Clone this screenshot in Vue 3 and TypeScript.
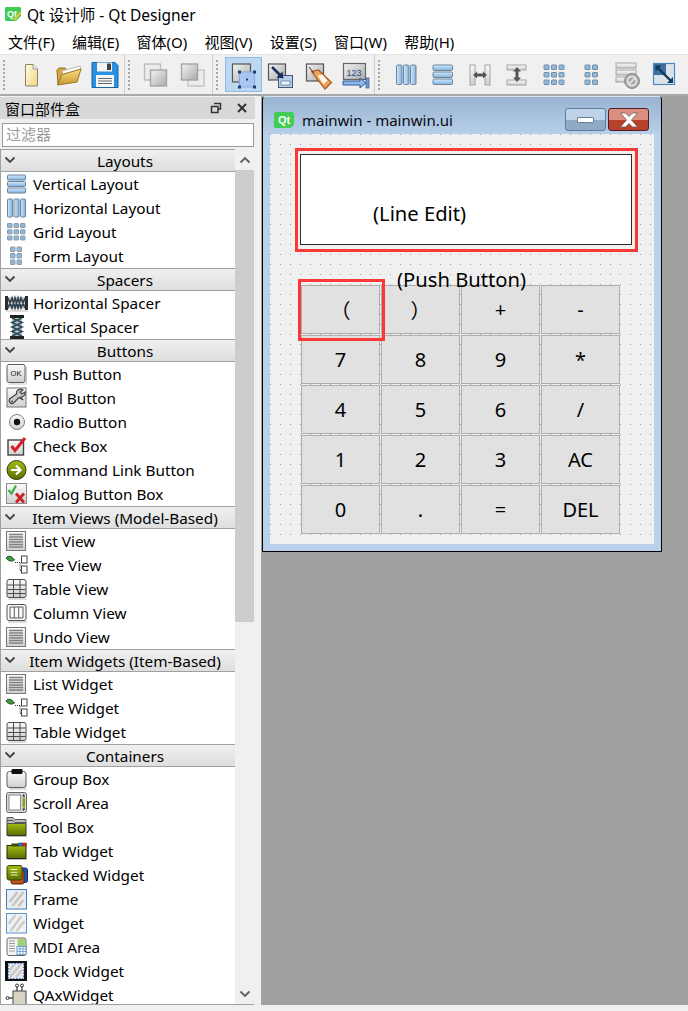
<script setup lang="ts">
type Item = { label: string; icon: string };
type Section = { title: string; items: Item[] };

const menus = ["文件(F)", "编辑(E)", "窗体(O)", "视图(V)", "设置(S)", "窗口(W)", "帮助(H)"];

const toolGroups: { icon: string; active?: boolean }[][] = [
  [{ icon: "t-new" }, { icon: "t-open" }, { icon: "t-save" }],
  [{ icon: "t-front" }, { icon: "t-back" }],
  [{ icon: "t-edit", active: true }, { icon: "t-signal" }, { icon: "t-tag" }, { icon: "t-buddy" }],
  [
    { icon: "t-hbox" },
    { icon: "t-vbox" },
    { icon: "t-hsplit" },
    { icon: "t-vsplit" },
    { icon: "t-grid" },
    { icon: "t-form" },
    { icon: "t-break" },
    { icon: "t-adjust" }
  ]
];

const sections: Section[] = [
  {
    title: "Layouts",
    items: [
      { label: "Vertical Layout", icon: "vbox" },
      { label: "Horizontal Layout", icon: "hbox" },
      { label: "Grid Layout", icon: "grid" },
      { label: "Form Layout", icon: "form" }
    ]
  },
  {
    title: "Spacers",
    items: [
      { label: "Horizontal Spacer", icon: "hspacer" },
      { label: "Vertical Spacer", icon: "vspacer" }
    ]
  },
  {
    title: "Buttons",
    items: [
      { label: "Push Button", icon: "push" },
      { label: "Tool Button", icon: "tool" },
      { label: "Radio Button", icon: "radio" },
      { label: "Check Box", icon: "check" },
      { label: "Command Link Button", icon: "command" },
      { label: "Dialog Button Box", icon: "dialog" }
    ]
  },
  {
    title: "Item Views (Model-Based)",
    items: [
      { label: "List View", icon: "list" },
      { label: "Tree View", icon: "tree" },
      { label: "Table View", icon: "table" },
      { label: "Column View", icon: "column" },
      { label: "Undo View", icon: "list" }
    ]
  },
  {
    title: "Item Widgets (Item-Based)",
    items: [
      { label: "List Widget", icon: "list" },
      { label: "Tree Widget", icon: "tree" },
      { label: "Table Widget", icon: "table" }
    ]
  },
  {
    title: "Containers",
    items: [
      { label: "Group Box", icon: "group" },
      { label: "Scroll Area", icon: "scroll" },
      { label: "Tool Box", icon: "toolbox" },
      { label: "Tab Widget", icon: "tab" },
      { label: "Stacked Widget", icon: "stacked" },
      { label: "Frame", icon: "frame" },
      { label: "Widget", icon: "widget" },
      { label: "MDI Area", icon: "mdi" },
      { label: "Dock Widget", icon: "dock" },
      { label: "QAxWidget", icon: "qax" }
    ]
  }
];

const keys = ["（", "）", "+", "-", "7", "8", "9", "*", "4", "5", "6", "/", "1", "2", "3", "AC", "0", ".", "=", "DEL"];
</script>

<template>
  <div class="app">
    <svg class="defs" width="0" height="0" aria-hidden="true">
      <defs>
        <linearGradient id="gBlue" x1="0" y1="0" x2="0" y2="1"><stop offset="0" stop-color="#d5e9fb" /><stop offset="1" stop-color="#7db2e2" /></linearGradient>
        <linearGradient id="gBlueH" x1="0" y1="0" x2="1" y2="0"><stop offset="0" stop-color="#d5e9fb" /><stop offset="1" stop-color="#7db2e2" /></linearGradient>
        <linearGradient id="gGray" x1="0" y1="0" x2="1" y2="1"><stop offset="0" stop-color="#f4f4f4" /><stop offset="1" stop-color="#a9a9a9" /></linearGradient>
        <linearGradient id="gLight" x1="0" y1="0" x2="0" y2="1"><stop offset="0" stop-color="#fafafa" /><stop offset="1" stop-color="#cfcfcf" /></linearGradient>
        <linearGradient id="gGreen" x1="0" y1="0" x2="0" y2="1"><stop offset="0" stop-color="#a3bb12" /><stop offset="1" stop-color="#586f00" /></linearGradient>
        <linearGradient id="gGold" x1="0" y1="0" x2="0" y2="1"><stop offset="0" stop-color="#f7dd8a" /><stop offset="1" stop-color="#c99a2e" /></linearGradient>
        <linearGradient id="gCream" x1="0" y1="0" x2="1" y2="1"><stop offset="0" stop-color="#fffde8" /><stop offset="1" stop-color="#f0d682" /></linearGradient>

        <!-- list icons, 24 x 24 -->
        <symbol id="vbox" viewBox="0 0 24 24">
          <g fill="url(#gBlue)" stroke="#6f8499"><rect x="2.500" y="3" width="18" height="5" rx="1" /><rect x="2.500" y="9.500" width="18" height="5" rx="1" /><rect x="2.500" y="16" width="18" height="5" rx="1" /></g>
        </symbol>
        <symbol id="hbox" viewBox="0 0 24 24">
          <g fill="url(#gBlueH)" stroke="#6f8499"><rect x="2.500" y="3" width="5" height="18" rx="1" /><rect x="9" y="3" width="5" height="18" rx="1" /><rect x="15.500" y="3" width="5" height="18" rx="1" /></g>
        </symbol>
        <symbol id="grid" viewBox="0 0 24 24">
          <g fill="#8eb8de" stroke="#8d9aa6">
            <rect x="2.500" y="3.500" width="4.500" height="4" rx=".5" /><rect x="9" y="3.500" width="4.500" height="4" rx=".5" /><rect x="15.500" y="3.500" width="4.500" height="4" rx=".5" />
            <rect x="2.500" y="9.800" width="4.500" height="4" rx=".5" /><rect x="9" y="9.800" width="4.500" height="4" rx=".5" /><rect x="15.500" y="9.800" width="4.500" height="4" rx=".5" />
            <rect x="2.500" y="16" width="4.500" height="4" rx=".5" /><rect x="9" y="16" width="4.500" height="4" rx=".5" /><rect x="15.500" y="16" width="4.500" height="4" rx=".5" />
          </g>
        </symbol>
        <symbol id="form" viewBox="0 0 24 24">
          <g fill="#8eb8de" stroke="#8d9aa6">
            <rect x="5.500" y="3" width="4.500" height="4.500" rx=".5" /><rect x="12" y="3" width="4.500" height="4.500" rx=".5" />
            <rect x="5.500" y="9.500" width="4.500" height="4.500" rx=".5" /><rect x="12" y="9.500" width="4.500" height="4.500" rx=".5" />
            <rect x="5.500" y="16" width="4.500" height="4.500" rx=".5" /><rect x="12" y="16" width="4.500" height="4.500" rx=".5" />
          </g>
        </symbol>
        <symbol id="hspacer" viewBox="0 0 24 24">
          <rect x="0" y="5" width="3" height="14" fill="#2c2c2c" /><rect x="20" y="5" width="3" height="14" fill="#2c2c2c" />
          <rect x="3" y="6" width="17" height="12" fill="#cfd4d8" />
          <path d="M3 17 7 7l3 10 3-10 3 10 4-10M3 7l4 10 3-10 3 10 3-10 4 10" fill="none" stroke="#33434f" stroke-width="1.700" />
          <path d="M1 20h22" stroke="#bbb" />
        </symbol>
        <symbol id="vspacer" viewBox="0 0 24 24">
          <rect x="5" y="0" width="14" height="3" fill="#1f1f1f" /><rect x="5" y="21" width="14" height="3" fill="#1f1f1f" />
          <rect x="7" y="3" width="10" height="18" fill="#b9c4ca" />
          <path d="M7 3l10 4.500L7 12l10 4.500L7 21M17 3 7 7.500 17 12 7 16.500 17 21" fill="none" stroke="#2f4a58" stroke-width="1.700" />
        </symbol>
        <symbol id="push" viewBox="0 0 24 24">
          <rect x="2" y="2.500" width="18" height="18" rx="2" fill="url(#gLight)" stroke="#5b5b5b" />
          <text x="11" y="14" font-size="7.500" font-family="Liberation Sans, sans-serif" text-anchor="middle" fill="#111">OK</text>
          <path d="M4 22h17.500V5" fill="none" stroke="#c4c4c4" />
        </symbol>
        <symbol id="tool" viewBox="0 0 24 24">
          <rect x="2" y="2" width="19" height="19" fill="url(#gLight)" stroke="#777" />
          <path d="M18 4c-3-2-7 0-6.500 4L4.500 13c-1.500 2.500 1.500 6 4 4l5.500-5.500 4 2.500-2-3c3 0 5-2.500 4-5l-3 2-2-2z" fill="#c8c8c8" stroke="#444" stroke-width="1.200" />
          <circle cx="7" cy="15.500" r="1" fill="#444" />
        </symbol>
        <symbol id="radio" viewBox="0 0 24 24">
          <circle cx="12" cy="12" r="7.500" fill="url(#gLight)" stroke="#7e7e7e" />
          <circle cx="12" cy="12" r="3.200" fill="#111" />
        </symbol>
        <symbol id="check" viewBox="0 0 24 24">
          <rect x="3" y="6" width="15.500" height="15" fill="url(#gLight)" stroke="#444" stroke-width="1.400" />
          <path d="M6.500 12l3.500 4.500L20 4" fill="none" stroke="#d3202a" stroke-width="3" />
        </symbol>
        <symbol id="command" viewBox="0 0 24 24">
          <circle cx="11.500" cy="12" r="9.500" fill="url(#gGreen)" stroke="#2f3a10" />
          <path d="M6 12h9M11 7.500l4.500 4.500L11 16.500" fill="none" stroke="#fff" stroke-width="2.200" />
        </symbol>
        <symbol id="dialog" viewBox="0 0 24 24">
          <rect x="1.500" y="1.500" width="20" height="20" fill="url(#gLight)" stroke="#8c8c8c" />
          <path d="M3.500 8l3 3.500L11 3.500" fill="none" stroke="#3fae49" stroke-width="2.300" />
          <path d="M11 11.500l8 9M19 11.500l-8 9" stroke="#d01f26" stroke-width="2.800" />
        </symbol>
        <symbol id="list" viewBox="0 0 24 24">
          <rect x="1.500" y="2.500" width="19" height="19" fill="url(#gLight)" stroke="#777" />
          <path d="M4 5.500h14M4 8h14M4 10.500h14M4 13h14M4 15.500h14M4 18h14" stroke="#7f7f7f" stroke-width="1.300" />
        </symbol>
        <symbol id="tree" viewBox="0 0 24 24">
          <path d="M1 5c2-3 6-2 8.500 2-3 2-6.500 1-8.500-2z" fill="#3e9c3a" stroke="#204d1e" />
          <path d="M10 9.500h5M15 9.500v8M15 17.500h3" stroke="#333" stroke-dasharray="1 1" fill="none" />
          <rect x="16.500" y="3" width="5.500" height="7" fill="#fff" stroke="#444" />
          <rect x="16.500" y="13" width="5.500" height="7" fill="#fff" stroke="#444" />
        </symbol>
        <symbol id="table" viewBox="0 0 24 24">
          <rect x="2" y="2.500" width="19" height="18" rx="2" fill="url(#gLight)" stroke="#4c4c4c" />
          <path d="M2.500 8h18M2.500 12.500h18M2.500 16.500h18M8.500 3v17M15 3v17" stroke="#4c4c4c" />
          <path d="M3.500 22h18" stroke="#bbb" />
        </symbol>
        <symbol id="column" viewBox="0 0 24 24">
          <rect x="2" y="3.500" width="19" height="16" rx="2" fill="#fafafa" stroke="#4c4c4c" />
          <path d="M5 6v11h13V6zM9.300 6v11M13.700 6v11" fill="none" stroke="#5a5a5a" />
          <path d="M3 21h19" stroke="#bbb" />
        </symbol>
        <symbol id="group" viewBox="0 0 24 24">
          <rect x="2" y="4.500" width="19" height="16" rx="2.500" fill="url(#gLight)" stroke="#5a5a5a" />
          <rect x="6.500" y="2" width="11" height="5" rx="1" fill="#111" />
          <path d="M4 22h18" stroke="#bbb" />
        </symbol>
        <symbol id="scroll" viewBox="0 0 24 24">
          <rect x="1.500" y="1.500" width="20" height="20" rx="2" fill="#d8d8d8" stroke="#666" />
          <rect x="4" y="4" width="11.500" height="15" fill="#fff" stroke="#888" />
          <rect x="17.500" y="6.500" width="2.500" height="10" fill="#8aa31a" />
          <path d="M18.700 3l1.500 2.500h-3zM18.700 20l1.500-2.500h-3z" fill="#222" />
        </symbol>
        <symbol id="toolbox" viewBox="0 0 24 24">
          <path d="M2 8.500h19v12H2z" fill="url(#gGreen)" stroke="#333" />
          <path d="M2 2.500h6l2 2h11v4H2z" fill="#bfbfbf" stroke="#555" />
          <path d="M2 5.500h6l2 2h11" fill="none" stroke="#555" />
          <path d="M3 21.500h19" stroke="#bbb" />
        </symbol>
        <symbol id="tab" viewBox="0 0 24 24">
          <rect x="2" y="6.500" width="19" height="13" fill="url(#gGreen)" stroke="#222" />
          <rect x="6.500" y="4.500" width="7" height="3" fill="#3b4a00" />
          <rect x="13.500" y="4" width="4" height="3" fill="#2c73c9" stroke="#1a3a6a" stroke-width=".5" />
          <rect x="17.500" y="4" width="4" height="3" fill="#d62c24" stroke="#6a1a1a" stroke-width=".5" />
          <path d="M3 20.500h19" stroke="#bbb" />
        </symbol>
        <symbol id="stacked" viewBox="0 0 24 24">
          <rect x="9" y="5" width="13.500" height="14.500" rx="2" fill="#1f59b5" stroke="#112a5c" />
          <rect x="6" y="7" width="13" height="14" rx="2" fill="#c2521d" stroke="#5c2208" />
          <rect x="2" y="2.500" width="15" height="14.500" rx="2" fill="url(#gGreen)" stroke="#3a4608" />
          <path d="M5.500 6.500h7M5.500 9.300h7M5.500 12h7" stroke="#f1f5c0" />
        </symbol>
        <symbol id="frame" viewBox="0 0 24 24">
          <rect x="1.500" y="2.500" width="20" height="19.500" fill="#ececec" stroke="#3e7cc4" />
          <path d="M4.500 15 12.500 5M7.500 19 18.500 5M13.500 19l5-6" stroke="#c4c4c4" stroke-width="2.600" />
        </symbol>
        <symbol id="widget" viewBox="0 0 24 24">
          <rect x="1.500" y="2.500" width="20" height="19.500" fill="#f2f2f2" stroke="#5a92d2" />
          <path d="M3.500 13 10.500 4M5.500 20 16.500 5M11.500 20l8-10" stroke="#cdcdcd" stroke-width="2.600" />
        </symbol>
        <symbol id="mdi" viewBox="0 0 24 24">
          <rect x="2" y="3" width="19" height="17.500" rx="2" fill="#f4f4f4" stroke="#666" />
          <rect x="12.500" y="4" width="8" height="7" fill="#9fd074" />
          <rect x="12" y="11.500" width="9" height="8" fill="#fff" stroke="#4d8ac8" stroke-width=".8" />
          <path d="M12 14h9M12 16.500h9M15 11.500v8M18 11.500v8" stroke="#4d8ac8" stroke-width=".7" />
          <path d="M4 6h6M4 8.500h6M4 11h6M4 13.500h6M4 16h6" stroke="#999" />
        </symbol>
        <symbol id="dock" viewBox="0 0 24 24">
          <rect x="0" y="2" width="22" height="20" fill="#111" />
          <rect x="3" y="4" width="16" height="16" fill="#e8e8e8" />
          <path d="M4 12l6-7M5 18 16 5M11 18l6-7" stroke="#c8c8c8" stroke-width="2.400" />
          <rect x="3.500" y="4.500" width="15" height="15" fill="none" stroke="#3d7bd0" stroke-dasharray="1.500 1.500" />
        </symbol>
        <symbol id="qax" viewBox="0 0 24 24">
          <rect x="8" y="8" width="13" height="14" fill="#d8d4c4" stroke="#444" />
          <path d="M12 8V3M17 8V3" stroke="#333" stroke-width="1.200" />
          <circle cx="12" cy="2.500" r="1.500" fill="#fff" stroke="#333" /><circle cx="17" cy="2.500" r="1.500" fill="#fff" stroke="#333" />
          <path d="M4 15h4" stroke="#333" stroke-width="1.200" /><circle cx="2.500" cy="15" r="1.500" fill="#fff" stroke="#333" />
        </symbol>

        <!-- toolbar icons, 32 x 32 -->
        <symbol id="t-new" viewBox="0 0 32 32">
          <path d="M10.500 5.500h7.500l4.500 4.500v17h-12z" fill="url(#gCream)" stroke="#8b8468" />
          <path d="M18 5.500v4.500h4.500" fill="#eeeeee" stroke="#9a9a9a" />
        </symbol>
        <symbol id="t-open" viewBox="0 0 32 32">
          <path d="M6 25 5 11l2-2h6l2 2h8v4z" fill="#d5a93e" stroke="#8d6b1e" />
          <path d="M10 12 28 7l1 3-18 6z" fill="#fff" stroke="#b9b9b9" />
          <path d="M5.500 26 10 15.500 29 10l-4 13z" fill="url(#gGold)" stroke="#9a7420" />
        </symbol>
        <symbol id="t-save" viewBox="0 0 32 32">
          <path d="M3 3.500h23l3 3v22H3z" fill="#2b8fe3" stroke="#1564a8" />
          <rect x="8" y="3.500" width="15" height="9" fill="#f4f4f4" />
          <rect x="18" y="4.500" width="4" height="6.500" fill="#444" />
          <rect x="7" y="16" width="18" height="12" fill="#f7f7f7" />
          <path d="M9 19.500h14M9 22h14M9 24.500h14" stroke="#666" />
        </symbol>
        <symbol id="t-front" viewBox="0 0 32 32">
          <rect x="4.500" y="5" width="16" height="16" fill="#ececec" stroke="#bdbdbd" stroke-width="1.400" />
          <rect x="10.500" y="11" width="16" height="16" fill="url(#gGray)" stroke="#a5a5a5" stroke-width="1.400" />
        </symbol>
        <symbol id="t-back" viewBox="0 0 32 32">
          <rect x="11" y="11" width="16" height="16" fill="#ececec" stroke="#c4c4c4" stroke-width="1.400" />
          <rect x="4.500" y="5" width="16" height="16" fill="url(#gGray)" stroke="#a5a5a5" stroke-width="1.400" />
        </symbol>
        <symbol id="t-edit" viewBox="0 0 32 32">
          <rect x="4.500" y="5" width="18" height="18" fill="url(#gGray)" stroke="#555" stroke-width="1.200" />
          <rect x="11.500" y="13" width="15" height="15" fill="#a9c6f2" stroke="#8aa8d8" />
          <g fill="#1f3f7a"><rect x="10" y="11.500" width="3" height="3" /><rect x="25" y="11.500" width="3" height="3" /><rect x="10" y="26.500" width="3" height="3" /><rect x="25" y="26.500" width="3" height="3" /><rect x="18" y="19.500" width="2" height="2" /></g>
        </symbol>
        <symbol id="t-signal" viewBox="0 0 32 32">
          <rect x="3.500" y="5" width="17" height="16" fill="url(#gGray)" stroke="#555" stroke-width="1.200" />
          <rect x="13.500" y="16.500" width="14" height="12" fill="#b9d1ef" stroke="#44597a" />
          <rect x="16" y="22" width="9" height="4" fill="#eef4ff" stroke="#44597a" stroke-width=".6" />
          <path d="M7 8l9 9" stroke="#1c2f5a" stroke-width="2.500" /><path d="M18.500 19.500l-7-1 6-6z" fill="#1c2f5a" />
        </symbol>
        <symbol id="t-tag" viewBox="0 0 32 32">
          <rect x="4.500" y="5" width="17" height="17" fill="url(#gGray)" stroke="#555" stroke-width="1.200" />
          <path d="M9.500 12.500l7-1.500 13 12.500-6.500 6.500z" fill="#f2a15d" stroke="#a8561c" stroke-width="1.200" />
          <path d="M15.500 16.500l5-1 5 6-4 4z" fill="#fff4e6" />
          <path d="M7 8l5 6" stroke="#333" />
        </symbol>
        <symbol id="t-buddy" viewBox="0 0 32 32">
          <rect x="4.500" y="4.500" width="22" height="16" fill="url(#gGray)" stroke="#666" stroke-width="1.200" />
          <text x="15" y="17" font-size="9" font-family="Liberation Sans, sans-serif" text-anchor="middle" fill="#274d86">123</text>
          <path d="M4 22h17v-3l6 5-6 5v-3H4z" fill="#8db9ea" stroke="#2f5a94" />
          <rect x="27" y="19" width="3" height="10" fill="#6b9ad4" stroke="#2f5a94" stroke-width=".7" />
        </symbol>
        <symbol id="t-hbox" viewBox="0 0 32 32">
          <g fill="url(#gBlueH)" stroke="#6f8499"><rect x="6.500" y="6" width="5.500" height="19.500" rx="1.200" /><rect x="13.500" y="6" width="5.500" height="19.500" rx="1.200" /><rect x="20.500" y="6" width="5.500" height="19.500" rx="1.200" /></g>
        </symbol>
        <symbol id="t-vbox" viewBox="0 0 32 32">
          <g fill="url(#gBlue)" stroke="#6f8499"><rect x="6" y="6" width="19.500" height="5.500" rx="1.200" /><rect x="6" y="13" width="19.500" height="5.500" rx="1.200" /><rect x="6" y="20" width="19.500" height="5.500" rx="1.200" /></g>
        </symbol>
        <symbol id="t-hsplit" viewBox="0 0 32 32">
          <g fill="url(#gLight)" stroke="#a2a2a2"><rect x="6" y="6" width="5" height="20" /><rect x="21" y="6" width="5" height="20" /></g>
          <path d="M9 16l4-3.500v2h6v-2l4 3.500-4 3.500v-2h-6v2z" fill="#555" />
        </symbol>
        <symbol id="t-vsplit" viewBox="0 0 32 32">
          <g fill="url(#gLight)" stroke="#a2a2a2"><rect x="6" y="6" width="19" height="5" /><rect x="6" y="21" width="19" height="5" /></g>
          <path d="M16 8l4 4.500h-2.500v6H20L16 23l-4-4.500h2.500v-6H12z" fill="#555" />
        </symbol>
        <symbol id="t-grid" viewBox="0 0 32 32">
          <g fill="#8fb9de" stroke="#748ca3">
            <rect x="6" y="6" width="5" height="4.500" rx=".6" /><rect x="13.500" y="6" width="5" height="4.500" rx=".6" /><rect x="21" y="6" width="5" height="4.500" rx=".6" />
            <rect x="6" y="13.500" width="5" height="4.500" rx=".6" /><rect x="13.500" y="13.500" width="5" height="4.500" rx=".6" /><rect x="21" y="13.500" width="5" height="4.500" rx=".6" />
            <rect x="6" y="21" width="5" height="4.500" rx=".6" /><rect x="13.500" y="21" width="5" height="4.500" rx=".6" /><rect x="21" y="21" width="5" height="4.500" rx=".6" />
          </g>
        </symbol>
        <symbol id="t-form" viewBox="0 0 32 32">
          <g fill="#8fb9de" stroke="#748ca3">
            <rect x="10" y="6" width="5" height="4.500" rx=".6" /><rect x="17.500" y="6" width="5" height="4.500" rx=".6" />
            <rect x="10" y="13.500" width="5" height="4.500" rx=".6" /><rect x="17.500" y="13.500" width="5" height="4.500" rx=".6" />
            <rect x="10" y="21" width="5" height="4.500" rx=".6" /><rect x="17.500" y="21" width="5" height="4.500" rx=".6" />
          </g>
        </symbol>
        <symbol id="t-break" viewBox="0 0 32 32">
          <g fill="url(#gLight)" stroke="#a2a2a2"><rect x="4" y="4" width="20" height="5" /><rect x="4" y="11" width="20" height="5" /><rect x="4" y="18" width="14" height="5" /></g>
          <circle cx="20" cy="22" r="7.500" fill="#a9a9a9" stroke="#8a8a8a" />
          <circle cx="20" cy="22" r="4.500" fill="none" stroke="#eee" stroke-width="1.500" />
          <path d="M17 25l6-6" stroke="#eee" stroke-width="1.500" />
        </symbol>
        <symbol id="t-adjust" viewBox="0 0 32 32">
          <rect x="4.500" y="4.500" width="21" height="21" fill="#dbe3ea" stroke="#4a86c0" stroke-width="1.200" />
          <path d="M5 5h12v11H5z" fill="#3f6f9f" />
          <path d="M8 8l14 14" stroke="#0f3b5e" stroke-width="2.400" />
          <path d="M6.500 6.500h6l-6 6zM24 24h-6l6-6z" fill="#0f3b5e" />
        </symbol>
      </defs>
    </svg>

    <header class="titlebar">
      <svg class="app-logo" width="18" height="16" viewBox="0 0 18 16">
        <path d="M2 1h14l1 1v8l-5 5H2l-1-1V2z" fill="#41cd52" />
        <text x="3" y="11" font-size="9" font-weight="700" font-family="Liberation Sans, sans-serif" fill="#fff">Qt</text>
        <path d="M10 14 17 6" stroke="#e8c24a" stroke-width="2" />
      </svg>
      <span>Qt 设计师 - Qt Designer</span>
    </header>

    <nav class="menubar">
      <span v-for="m in menus" :key="m" class="menu">{{ m }}</span>
    </nav>

    <div class="toolbar">
      <div v-for="(group, i) in toolGroups" :key="i" class="toolgroup">
        <span class="grip"></span>
        <span v-for="tool in group" :key="tool.icon" class="toolbtn" :class="{ active: tool.active }">
          <svg width="32" height="32"><use :href="'#' + tool.icon" /></svg>
        </span>
      </div>
    </div>

    <main class="main">
      <aside class="dock">
        <div class="dock-title">
          <span>窗口部件盒</span>
          <svg class="dock-float" width="12" height="12" viewBox="0 0 12 12">
            <path d="M4 1.500h6.500V7H8M1.500 4.500H8v6H1.500z" fill="none" stroke="#333" stroke-width="1.500" />
          </svg>
          <svg class="dock-close" width="12" height="12" viewBox="0 0 12 12">
            <path d="M2 2l8 8M10 2l-8 8" stroke="#333" stroke-width="2" />
          </svg>
        </div>
        <div class="filter">过滤器</div>
        <div class="box">
          <div class="list">
            <section v-for="s in sections" :key="s.title">
              <div class="sec-head">
                <svg width="12" height="8" viewBox="0 0 12 8"><path d="M1.500 1.500 6 6l4.500-4.500" fill="none" stroke="#444" stroke-width="1.800" /></svg>
                <span>{{ s.title }}</span>
              </div>
              <div v-for="it in s.items" :key="it.label" class="row">
                <svg width="24" height="24"><use :href="'#' + it.icon" /></svg>
                <span>{{ it.label }}</span>
              </div>
            </section>
          </div>
          <div class="scrollbar">
            <span class="arrow">
              <svg width="12" height="8" viewBox="0 0 12 8"><path d="M1.500 6.500 6 2l4.500 4.500" fill="none" stroke="#606060" stroke-width="1.800" /></svg>
            </span>
            <span class="thumb"></span>
            <span class="track"></span>
            <span class="arrow">
              <svg width="12" height="8" viewBox="0 0 12 8"><path d="M1.500 1.500 6 6l4.500-4.500" fill="none" stroke="#606060" stroke-width="1.800" /></svg>
            </span>
          </div>
        </div>
      </aside>

      <div class="mdi">
        <div class="window">
          <div class="win-title">
            <span class="qt-badge">Qt</span>
            <span class="win-name">mainwin - mainwin.ui</span>
            <span class="win-btn min"><i></i></span>
            <span class="win-btn close">
              <svg width="20" height="16" viewBox="0 0 20 16">
                <path d="M1.500 1h5L10 4.500 13.500 1h5l-6 7 6 7h-5L10 11.500 6.500 15h-5l6-7z" fill="#fff" stroke="#6e5a58" stroke-width=".8" />
              </svg>
            </span>
          </div>
          <div class="canvas">
            <div class="line-edit"></div>
            <div class="keypad">
              <button v-for="k in keys" :key="k" class="key">{{ k }}</button>
            </div>
            <span class="note note-edit">(Line Edit)</span>
            <span class="note note-push">(Push Button)</span>
            <span class="mark mark-edit"></span>
            <span class="mark mark-key"></span>
          </div>
        </div>
      </div>
    </main>
    <div class="statusbar"></div>
  </div>
</template>

<style scoped>
.app {
  width: 688px;
  height: 1011px;
  overflow: hidden;
  display: flex;
  flex-direction: column;
  position: relative;
  background: #f0f0f0;
  color: #000;
  font-family: "Noto Sans", "Noto Sans CJK SC", sans-serif;
  font-size: 15px;
}

.defs {
  position: absolute;
}

.titlebar {
  height: 30px;
  flex: none;
  box-sizing: border-box;
  display: flex;
  align-items: center;
  gap: 5px;
  padding: 0 0 2px 4px;
  background: #fff;
  font-size: 15.500px;
}

.menubar {
  height: 24px;
  flex: none;
  display: flex;
  align-items: center;
  background: #fff;
}

.menu {
  padding: 0 8.600px;
  line-height: 24px;
  white-space: nowrap;
  font-size: 15px;
}

.menu:first-child {
  padding-left: 8px;
}

.toolbar {
  height: 42px;
  flex: none;
  box-sizing: border-box;
  display: flex;
  border-top: 1px solid #e4e4e4;
  border-bottom: 2px solid #a9a9a9;
  background: #f0f0f0;
}

.toolgroup {
  display: flex;
  align-items: center;
  padding: 0 1px 0 3px;
  border-right: 1px solid #cfcfcf;
}

.toolgroup:last-child {
  border-right: 0;
}

.grip {
  width: 2px;
  height: 30px;
  margin-right: 7px;
  background: repeating-linear-gradient(#a8a8a8 0 2px, transparent 2px 4px);
}

.toolbtn {
  width: 37px;
  height: 35px;
  box-sizing: border-box;
  display: flex;
  align-items: center;
  justify-content: center;
}

.toolbtn.active {
  background: #bcd8f1;
  border: 1px solid #8fb9e3;
}

.main {
  flex: 1;
  min-height: 0;
  display: flex;
}

.dock {
  width: 255px;
  flex: none;
  box-sizing: border-box;
  padding-top: 1px;
  display: flex;
  flex-direction: column;
  overflow: hidden;
}

.dock-title {
  height: 22px;
  flex: none;
  display: flex;
  align-items: center;
  padding-left: 5px;
  background: #d8d8d8;
}

.dock-float {
  margin-left: auto;
}

.dock-close {
  margin: 0 7px 0 14px;
}

.filter {
  height: 24px;
  flex: none;
  box-sizing: border-box;
  margin: 4px 1px 2px 2px;
  padding-left: 3px;
  line-height: 21px;
  border: 1px solid #9a9a9a;
  background: #fff;
  color: #9a9a9a;
}

.box {
  flex: 1;
  min-height: 0;
  display: flex;
  margin-right: 1px;
  border-left: 1px solid #a0a0a0;
  border-bottom: 1px solid #a0a0a0;
}

.list {
  flex: 1;
  min-width: 0;
  overflow: hidden;
  background: #fff;
  font-size: 15.300px;
}

.sec-head {
  height: 23px;
  box-sizing: border-box;
  display: grid;
  grid-template-columns: 24px 1fr 10px;
  align-items: center;
  justify-items: center;
  border-top: 1px solid #a0a0a0;
  border-bottom: 1px solid #a0a0a0;
  background: linear-gradient(#f0f0f0, #dedede);
  line-height: 21px;
  white-space: nowrap;
}

.sec-head span {
  padding-top: 1px;
}

.sec-head svg {
  justify-self: start;
  margin: -3px 0 0 3px;
}

.row {
  height: 24px;
  display: flex;
  align-items: center;
  gap: 4px;
  padding-left: 4px;
  white-space: nowrap;
}

.scrollbar {
  width: 19px;
  flex: none;
  display: flex;
  flex-direction: column;
  background: #f0f0f0;
}

.arrow {
  height: 21px;
  flex: none;
  display: flex;
  align-items: center;
  justify-content: center;
}

.thumb {
  height: 452px;
  flex: none;
  background: #cdcdcd;
}

.track {
  flex: 1;
}

.mdi {
  flex: 1;
  min-width: 0;
  margin-left: 6px;
  padding-left: 1px;
  background: #a0a0a0;
}

.window {
  width: 400px;
  height: 456px;
  box-sizing: border-box;
  display: flex;
  flex-direction: column;
  padding: 0 7px 7px;
  border: 1px solid #000;
  border-top-color: #d8e2ec;
  border-radius: 4px 4px 0 0;
  background: linear-gradient(#99b4d1, #b9d1ea 40px);
}

.win-title {
  height: 37px;
  flex: none;
  box-sizing: border-box;
  display: flex;
  align-items: center;
  padding: 8px 5px 0 4px;
}

.qt-badge {
  width: 20px;
  height: 16px;
  display: flex;
  align-items: center;
  justify-content: center;
  margin-right: 8px;
  background: #41cd52;
  border-radius: 2px 2px 5px 2px;
  color: #fff;
  font-size: 11px;
  font-weight: 600;
  font-family: "Liberation Sans", sans-serif;
}

.win-name {
  font-size: 15px;
  white-space: nowrap;
  color: #0a0a14;
}

.win-btn {
  height: 23px;
  box-sizing: border-box;
  display: flex;
  align-items: center;
  justify-content: center;
  border-radius: 3px;
}

.win-btn.min {
  width: 41px;
  margin-left: auto;
  border: 1px solid #5f7e9f;
  background: linear-gradient(#bed2e8 50%, #8fa9c7 50%);
}

.win-btn.min i {
  width: 17px;
  height: 6px;
  box-sizing: border-box;
  background: #fff;
  border: 1px solid #6b7f95;
  border-radius: 1px;
}

.win-btn.close {
  width: 41px;
  margin-left: 2px;
  border: 1px solid #571a2c;
  background: linear-gradient(#da8f80 50%, #b8412c 50%);
}

.canvas {
  flex: 1;
  position: relative;
  box-sizing: border-box;
  padding: 20px 0 0 30px;
  background-color: #f0f0f0;
  background-image: conic-gradient(from 0deg at 1px 1px, transparent 75%, #a0a0a0 0);
  background-size: 10px 10px;
}

.line-edit {
  width: 332px;
  height: 91px;
  box-sizing: border-box;
  border: 1px solid #2b2b2b;
  background: #fff;
}

.keypad {
  display: grid;
  grid-template-columns: repeat(4, 79px);
  grid-auto-rows: 49px;
  gap: 1px;
  width: 320px;
  margin: 40px 0 0 1px;
}

.key {
  padding: 0;
  border: 1px solid #adadad;
  background: #e1e1e1;
  color: #000;
  font-family: "Noto Sans", "Noto Sans CJK SC", sans-serif;
  font-size: 20px;
}

.note {
  position: absolute;
  font-size: 20.200px;
  line-height: 24px;
  white-space: nowrap;
}

.note-edit {
  left: 103px;
  top: 67px;
}

.note-push {
  left: 127px;
  top: 133px;
}

.mark {
  position: absolute;
  box-sizing: border-box;
  border: 3px solid #fb3838;
}

.mark-edit {
  left: 25px;
  top: 14px;
  width: 343px;
  height: 104px;
}

.mark-key {
  left: 28px;
  top: 145px;
  width: 87px;
  height: 62px;
}

.statusbar {
  height: 6px;
  flex: none;
  background: #f0f0f0;
}
</style>
